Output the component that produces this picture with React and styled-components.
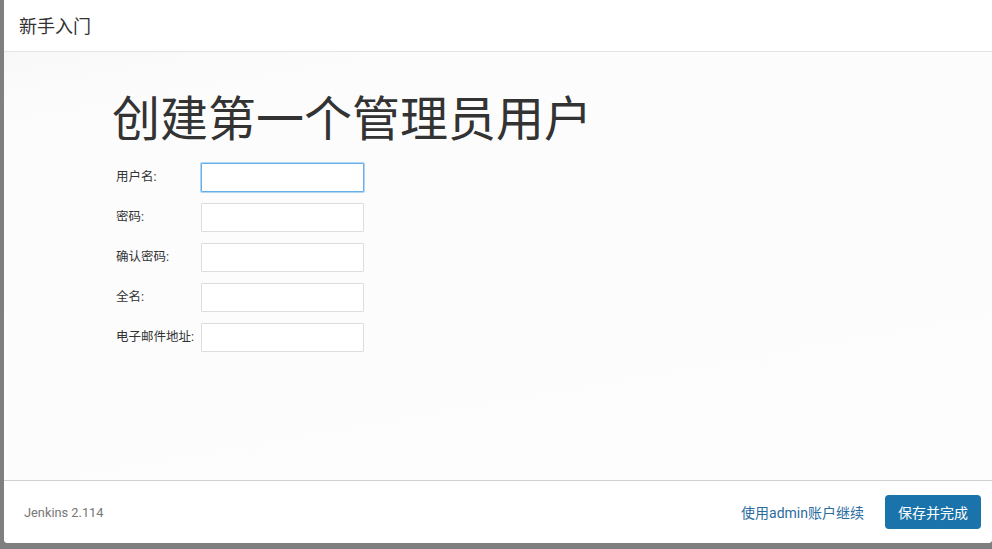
import styled, { createGlobalStyle } from 'styled-components'

const GlobalStyle = createGlobalStyle`
  html, body {
    margin: 0;
    padding: 0;
    background: #808080;
    font-family: "Roboto", "Noto Sans CJK SC", sans-serif;
  }
  * { box-sizing: border-box; }
`;

const Backdrop = styled.div`
  width: 992px;
  height: 549px;
  padding: 0 0 6px 4px;
  background: #7f7f7f;
`;

const Dialog = styled.div`
  height: 543px;
  background: #fff;
  border-radius: 0 0 4px 4px;
  display: flex;
  flex-direction: column;
  overflow: hidden;
`;

const Header = styled.div`
  height: 52px;
  border-bottom: 1px solid #e5e5e5;
  display: flex;
  align-items: center;
  padding: 0 15px 2px;
  font-size: 18px;
  color: #333;
`;

const Body = styled.div`
  flex: 1;
  background: linear-gradient(170deg, #f8f8f8 0%, #fcfcfc 12%, #fdfdfd 100%);
  border-bottom: 1px solid #d0d0d0;
  padding: 31px 0 0 108px;
`;

const Title = styled.h1`
  margin: 0 0 16px;
  font-size: 48px;
  font-weight: 400;
  line-height: 64px;
  color: #333;
  font-family: "Noto Sans CJK SC", sans-serif;
`;

const Form = styled.div`
  display: grid;
  grid-template-columns: 85px 163px;
  row-gap: 11px;
  padding-left: 4px;
`;

const Label = styled.label`
  font-size: 12.5px;
  color: #333;
  line-height: 27px;
  white-space: nowrap;
`;

const Input = styled.input`
  height: 29px;
  width: 163px;
  border: 1px solid ${p => (p.$focus ? '#66afe9' : '#ddd')};
  box-shadow: ${p => (p.$focus ? '0 0 0 1px rgba(102,175,233,0.5)' : 'none')};
  border-radius: 1px;
  background: #fff;
  outline: none;
  padding: 4px 6px;
  font-size: 12px;
`;

const Footer = styled.div`
  height: 62px;
  display: flex;
  align-items: center;
  padding: 0 11px 0 20px;
  background: #fff;
`;

const Version = styled.span`
  font-size: 12.8px;
  color: #777;
  flex: 1;
`;

const Link = styled.a`
  font-size: 14px;
  color: #2b6c9f;
  text-decoration: none;
  margin-right: 21px;
  cursor: pointer;
`;

const Button = styled.button`
  height: 34px;
  width: 96px;
  border: none;
  border-radius: 4px;
  background: #1a73aa;
  color: #fff;
  font-size: 14px;
  font-family: inherit;
  cursor: pointer;
`;

const fields = [
  { label: '用户名:', focus: true },
  { label: '密码:', type: 'password' },
  { label: '确认密码:', type: 'password' },
  { label: '全名:' },
  { label: '电子邮件地址:' },
]

const App = () => {
  return (
    <>
      <GlobalStyle />
      <Backdrop>
        <Dialog>
          <Header>新手入门</Header>
          <Body>
            <Title>创建第一个管理员用户</Title>
            <Form>
              {fields.map(f => [
                <Label key={f.label + 'l'}>{f.label}</Label>,
                <Input key={f.label + 'i'} type={f.type || 'text'} $focus={f.focus} />,
              ])}
            </Form>
          </Body>
          <Footer>
            <Version>Jenkins 2.114</Version>
            <Link>使用admin账户继续</Link>
            <Button>保存并完成</Button>
          </Footer>
        </Dialog>
      </Backdrop>
    </>
  )
}

export default App
